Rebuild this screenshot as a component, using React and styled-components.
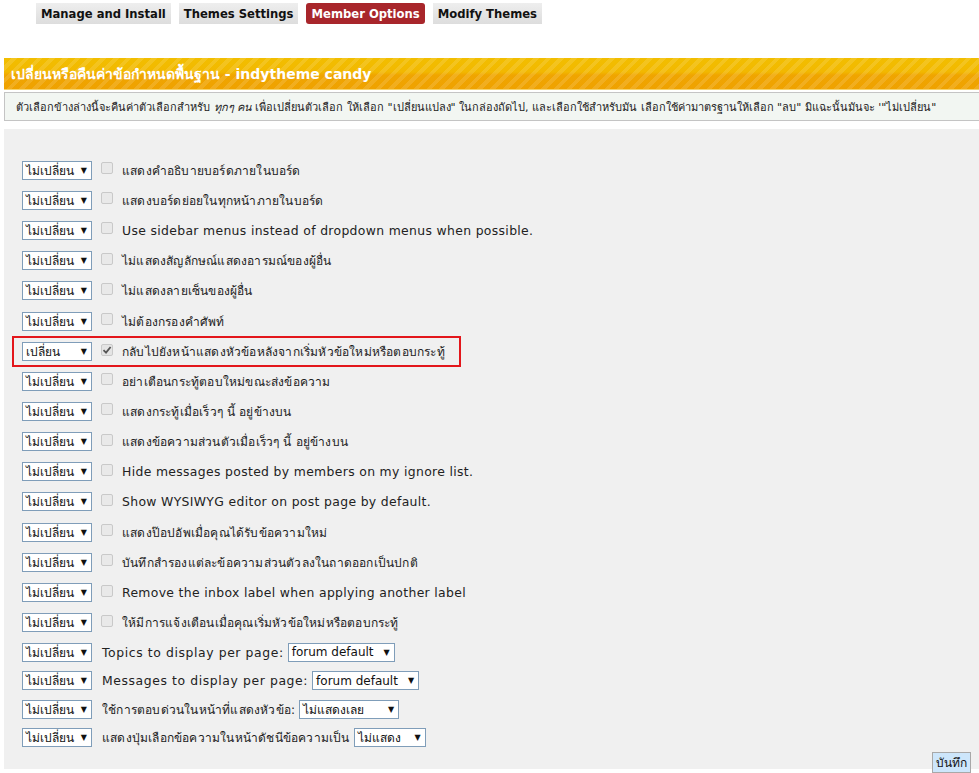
import React from 'react'
import styled, { createGlobalStyle } from 'styled-components'

const GlobalStyle = createGlobalStyle`
  html, body {
    margin: 0;
    padding: 0;
    background: #ffffff;
    overflow: hidden;
  }
  body {
    font-family: Tahoma, "DejaVu Sans", "Noto Sans", sans-serif;
    color: #222;
  }
`

const Page = styled.div`
  width: 979px;
  height: 773px;
  overflow: hidden;
`

const Tabs = styled.nav`
  display: flex;
  gap: 8px;
  padding: 3px 0 0 36px;
`

const Tab = styled.a`
  display: inline-flex;
  align-items: center;
  height: 21px;
  padding: 0 5px;
  font-family: "DejaVu Sans", Verdana, sans-serif;
  font-weight: bold;
  font-size: 11.6px;
  color: ${(p) => (p.$active ? '#ffffff' : '#111111')};
  background: ${(p) =>
    p.$active
      ? '#a8262b'
      : 'linear-gradient(to bottom, #eeeeee 0%, #dddddd 100%)'};
  border-radius: ${(p) => (p.$active ? '3px' : '0')};
  text-decoration: none;
  white-space: nowrap;
`

const Header = styled.div`
  margin: 34px 0 0 4px;
  height: 31px;
  display: flex;
  align-items: center;
  padding-left: 7px;
  color: #ffffff;
  font-weight: bold;
  font-size: 14px;
  font-family: "DejaVu Sans", Verdana, sans-serif;
  background:
    repeating-linear-gradient(
      -45deg,
      rgba(255, 255, 255, 0.12) 0px,
      rgba(255, 255, 255, 0.12) 4px,
      rgba(255, 255, 255, 0) 4px,
      rgba(255, 255, 255, 0) 9px
    ),
    linear-gradient(to bottom, #f2be00 0%, #f2b800 45%, #f0a500 55%, #efa200 100%);
  border-bottom: 1px solid #f7d36a;
`

const Description = styled.div`
  margin: 2px 0 0 4px;
  height: 27px;
  display: flex;
  align-items: center;
  padding-left: 11px;
  background: #f2f6f2;
  border-top: 1px solid #c4c4c4;
  border-bottom: 1px solid #c4c4c4;
  border-left: 1px solid #c4c4c4;
  font-size: 11px;
  color: #222;
  white-space: nowrap;
  overflow: hidden;
  em {
    font-style: italic;
  }
`

const Panel = styled.form`
  margin: 8px 0 0 4px;
  padding: 26px 0 0 18px;
  background: #f0f0f0;
  height: 640px;
  box-sizing: border-box;
`

const Row = styled.div`
  display: flex;
  align-items: center;
  height: ${(p) => (p.$short ? '28.5px' : '30.2px')};
  box-sizing: border-box;
  ${(p) =>
    p.$marked &&
    `
    width: fit-content;
    outline: 2px solid #e3161b;
    margin: 2px 0 1px -8px;
    padding: 0 14px 0 8px;
    height: 27px;
  `}
`

const Drop = styled.span`
  flex-shrink: 0;
  display: inline-flex;
  align-items: center;
  justify-content: space-between;
  box-sizing: border-box;
  width: ${(p) => p.$w}px;
  height: 19px;
  padding: 0 4px 0 3px;
  background: #ffffff;
  border: 1px solid #7f9db9;
  font-size: 12px;
  color: #111;
  white-space: nowrap;
  overflow: hidden;
  margin-left: ${(p) => p.$ml || 0}px;
  &::after {
    content: '▼';
    font-size: 8px;
    font-family: "DejaVu Sans", sans-serif;
    color: #111;
    margin-left: 3px;
  }
`

const Check = styled.span`
  flex-shrink: 0;
  display: inline-flex;
  align-items: center;
  justify-content: center;
  width: 12px;
  height: 12px;
  box-sizing: border-box;
  margin: 0 9px;
  border: 1px solid #c9c9c9;
  border-radius: 2px;
  background: ${(p) => (p.$checked ? '#e4e4e4' : '#e9e9e9')};
  transform: translateY(-2px);
  svg {
    width: 10px;
    height: 10px;
  }
`

const Label = styled.span`
  font-family: ${(p) =>
    p.$latin ? '"DejaVu Sans", Verdana, sans-serif' : 'Tahoma, "DejaVu Sans", sans-serif'};
  font-size: ${(p) => (p.$latin ? '12.4px' : '12px')};
  letter-spacing: ${(p) => (p.$latin ? (p.$plain ? '0.6px' : '0.34px') : '0.2px')};
  color: #222;
  white-space: nowrap;
  margin-left: ${(p) => (p.$plain ? '10px' : '0')};
`

const Footer = styled.div`
  display: flex;
  justify-content: flex-end;
  padding: 0 8px 0 0;
`

const SaveButton = styled.button`
  height: 21px;
  padding: 0 3px;
  font-family: Tahoma, "DejaVu Sans", sans-serif;
  font-size: 12px;
  color: #111;
  background: #cde6fb;
  border: 1px solid #a8a8a8;
  border-radius: 0;
`

const CheckMark = () => (
  <svg viewBox="0 0 10 10">
    <path d="M1.5 5.2 L4 7.6 L8.6 2" fill="none" stroke="#555" strokeWidth="1.8" />
  </svg>
)

const options = [
  { text: 'แสดงคำอธิบายบอร์ดภายในบอร์ด' },
  { text: 'แสดงบอร์ดย่อยในทุกหน้าภายในบอร์ด' },
  { text: 'Use sidebar menus instead of dropdown menus when possible.', latin: true },
  { text: 'ไม่แสดงสัญลักษณ์แสดงอารมณ์ของผู้อื่น' },
  { text: 'ไม่แสดงลายเซ็นของผู้อื่น' },
  { text: 'ไม่ต้องกรองคำศัพท์' },
  { text: 'กลับไปยังหน้าแสดงหัวข้อหลังจากเริ่มหัวข้อใหม่หรือตอบกระทู้', checked: true },
  { text: 'อย่าเตือนกระทู้ตอบใหม่ขณะส่งข้อความ' },
  { text: 'แสดงกระทู้เมื่อเร็วๆ นี้ อยู่ข้างบน' },
  { text: 'แสดงข้อความส่วนตัวเมื่อเร็วๆ นี้ อยู่ข้างบน' },
  { text: 'Hide messages posted by members on my ignore list.', latin: true },
  { text: 'Show WYSIWYG editor on post page by default.', latin: true },
  { text: 'แสดงป๊อปอัพเมื่อคุณได้รับข้อความใหม่' },
  { text: 'บันทึกสำรองแต่ละข้อความส่วนตัวลงในถาดออกเป็นปกติ' },
  { text: 'Remove the inbox label when applying another label', latin: true },
  { text: 'ให้มีการแจ้งเตือนเมื่อคุณเริ่มหัวข้อใหม่หรือตอบกระทู้' },
]

const selects = [
  { text: 'Topics to display per page:', latin: true, value: 'forum default', w: 107 },
  { text: 'Messages to display per page:', latin: true, value: 'forum default', w: 107 },
  { text: 'ใช้การตอบด่วนในหน้าที่แสดงหัวข้อ:', value: 'ไม่แสดงเลย', w: 100 },
  { text: 'แสดงปุ่มเลือกข้อความในหน้าดัชนีข้อความเป็น', value: 'ไม่แสดง', w: 72 },
]

const App = () => {
  return (
    <Page>
      <GlobalStyle />
      <Tabs>
        <Tab>Manage and Install</Tab>
        <Tab>Themes Settings</Tab>
        <Tab $active>Member Options</Tab>
        <Tab>Modify Themes</Tab>
      </Tabs>

      <Header>เปลี่ยนหรือคืนค่าข้อกำหนดพื้นฐาน - indytheme candy</Header>
      <Description>
        ตัวเลือกข้างล่างนี้จะคืนค่าตัวเลือกสำหรับ&nbsp;<em>ทุกๆ คน</em>&nbsp;เพื่อเปลี่ยนตัวเลือก
        ให้เลือก "เปลี่ยนแปลง" ในกล่องถัดไป, และเลือกใช้สำหรับมัน เลือกใช้ค่ามาตรฐานให้เลือก "ลบ"
        มิแฉะนั้นมันจะ '"ไม่เปลี่ยน"
      </Description>

      <Panel onSubmit={(e) => e.preventDefault()}>
        {options.map((item, index) => (
          <Row key={index} $marked={item.checked}>
            <Drop $w={70}>{item.checked ? 'เปลี่ยน' : 'ไม่เปลี่ยน'}</Drop>
            <Check $checked={item.checked}>{item.checked && <CheckMark />}</Check>
            <Label $latin={item.latin}>{item.text}</Label>
          </Row>
        ))}
        {selects.map((item, index) => (
          <Row key={index} $short>
            <Drop $w={70}>ไม่เปลี่ยน</Drop>
            <Label $latin={item.latin} $plain>
              {item.text}
            </Label>
            <Drop $w={item.w} $ml={4}>
              {item.value}
            </Drop>
          </Row>
        ))}
        <Footer>
          <SaveButton type="submit">บันทึก</SaveButton>
        </Footer>
      </Panel>
    </Page>
  )
}

export default App
